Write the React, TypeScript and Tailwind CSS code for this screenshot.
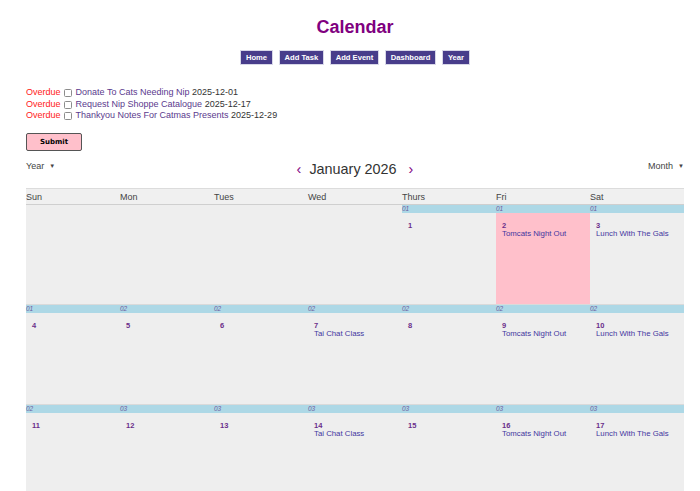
import React from "react";

type Cell = { d: number; w: string; e?: string; pink?: boolean } | null;

function buildWeeks(): Cell[][] {
  const rows: Cell[][] = [];
  for (let d = 1; d <= 31; d++) {
    const dow = (d + 3) % 7;
    const r = Math.floor((d + 3) / 7);
    if (!rows[r]) rows[r] = [null, null, null, null, null, null, null];
    const wk = Math.floor((d + 2) / 7) + 1;
    let e: string | undefined;
    if (dow === 5) e = "Tomcats Night Out";
    if (dow === 6) e = "Lunch With The Gals";
    if (dow === 3) e = "Tai Chat Class";
    rows[r][dow] = { d, w: wk < 10 ? "0" + wk : String(wk), e, pink: d === 2 };
  }
  return rows;
}

const days = ["Sun", "Mon", "Tues", "Wed", "Thurs", "Fri", "Sat"];

const overdue = [
  ["Donate To Cats Needing Nip", "2025-12-01"],
  ["Request Nip Shoppe Catalogue", "2025-12-17"],
  ["Thankyou Notes For Catmas Presents", "2025-12-29"],
];

const navs = ["Home", "Add Task", "Add Event", "Dashboard", "Year"];

export default function App() {
  const weeks = buildWeeks();
  return (
    <div className="h-[491px] w-[700px] overflow-hidden bg-white font-['Liberation_Sans',Arial,sans-serif] text-[#333]">
      <div className="ml-[26px] w-[658px] flex flex-col">
        <h1 className="pt-[16px] text-center text-[18px] leading-[22px] font-bold text-[#800080]">Calendar</h1>
        <div className="mt-[12px] flex justify-center gap-[5.5px]">
          {navs.map((n) => (
            <button
              key={n}
              className="h-[15px] px-[5px] bg-[#483d8b] border border-[#d8d8e8] text-white text-[7.6px] font-bold leading-[13px]"
            >
              {n}
            </button>
          ))}
        </div>

        <div className="mt-[22px] flex flex-col text-[9px] leading-[11.7px]">
          {overdue.map(([t, d]) => (
            <div key={t} className="flex items-center whitespace-nowrap">
              <span className="text-[#ff2020]">Overdue</span>
              <input
                type="checkbox"
                className="appearance-none ml-[3px] mr-[4px] w-[8px] h-[8px] border border-[#8c8c8c] rounded-[1.5px] bg-white"
              />
              <span className="text-[#5b3a8e]">{t}</span>
              <span className="ml-[2.5px] text-[#333]">{d}</span>
            </div>
          ))}
        </div>

        <div className="mt-[11px] flex">
          <button className="w-[56px] h-[18px] bg-[#ffc0cb] border border-[#555] rounded-[2px] text-[7px] font-bold text-black font-['DejaVu_Sans',sans-serif] leading-[16px]">
            Submit
          </button>
        </div>

        <div className="mt-[9px] flex items-start justify-between h-[28px]">
          <div className="w-[120px] flex items-center text-[9px] leading-[12px] text-[#444]">
            Year<span className="ml-[5px] text-[6px]">▼</span>
          </div>
          <div className="mt-[1px] flex items-center text-[14.4px] leading-[17px] text-[#333]">
            <span className="text-[#800080] mr-[8px]">‹</span>
            <span>January 2026</span>
            <span className="text-[#800080] ml-[12px]">›</span>
          </div>
          <div className="w-[120px] flex items-center justify-end text-[9px] leading-[12px] text-[#444]">
            Month<span className="ml-[5px] text-[6px]">▼</span>
          </div>
        </div>

        <div className="border-t border-[#dcdcdc]">
          <div className="grid grid-cols-7 h-[16px] bg-[#f0f0f0] border-b border-[#cfcfcf] text-[9px] leading-[16px] text-[#444]">
            {days.map((d) => (
              <div key={d}>{d}</div>
            ))}
          </div>
          {weeks.map((row, ri) => (
            <div key={ri} className="grid grid-cols-7 h-[100px] bg-[#eeeeee] border-b border-[#dadada]">
              {row.map((c, ci) =>
                c ? (
                  <div key={ci} className="flex flex-col">
                    <div className="h-[8px] bg-[#add8e6] text-[6.5px] leading-[8px] italic text-[#6e5d9e]">{c.w}</div>
                    <div className={`flex-1 pl-[6px] pt-[9px] ${c.pink ? "bg-[#ffc0cb]" : ""}`}>
                      <div className="text-[7.5px] leading-[7.5px] font-bold text-[#6a2d8a]">{c.d}</div>
                      {c.e && <div className="text-[7.8px] leading-[8px] text-[#3f36a0]">{c.e}</div>}
                    </div>
                  </div>
                ) : (
                  <div key={ci} />
                )
              )}
            </div>
          ))}
        </div>
      </div>
    </div>
  );
}
